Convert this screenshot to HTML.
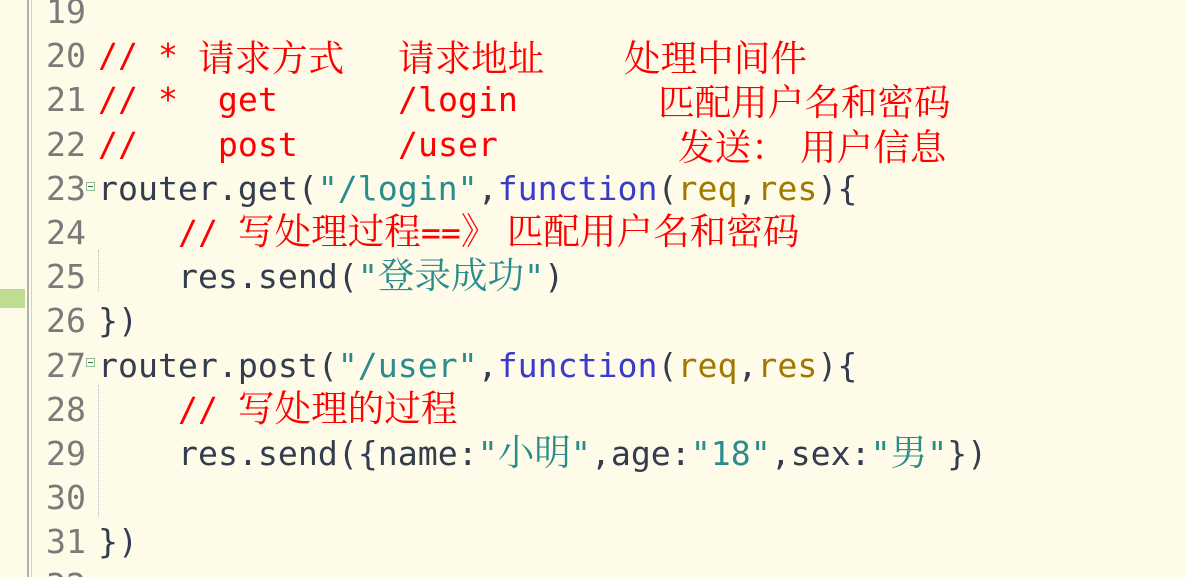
<!DOCTYPE html>
<html style="overflow:hidden;width:1185px;height:577px"><head><meta charset="utf-8"><style>
html,body{margin:0;padding:0;}
body{width:1185px;height:577px;overflow:hidden;background:#fffbe9;font-family:"DejaVu Sans Mono",monospace;font-size:33.2px;}
#w{position:relative;width:1185px;height:577px;overflow:hidden;}
.s{position:absolute;white-space:pre;line-height:44px;height:44px;color:#333d4d;}
.n{position:absolute;width:86px;left:0;text-align:right;color:#7a7a7a;line-height:44px;height:44px;white-space:pre;}
.c{font-family:"Noto Serif CJK SC","Liberation Serif",serif;font-size:36.6px;line-height:20px;}
.r{color:#ff0000}.t{color:#2a8c8c}.f{color:#3a3acc}.o{color:#a07800}
.fold{position:absolute;left:86px;width:7px;height:7px;border:1px solid #8cc08c;background:#fff;}
.fold:after{content:"";position:absolute;left:1px;top:3px;width:5px;height:1px;background:#555;}
.g{position:absolute;left:98px;border-left:1px dotted #b8b8b8;}
</style></head><body><div id="w">
<div style="position:absolute;left:27px;top:0;width:2px;height:577px;background:#b0b0b0"></div>
<div style="position:absolute;left:31px;top:0;width:1px;height:577px;background:#d0d0d0"></div>
<div style="position:absolute;left:0;top:289px;width:25px;height:19px;background:#c0dc90"></div>
<div class="g" style="top:250px;height:42px"></div>
<div class="g" style="top:385px;height:132px"></div>

<div class="n" style="top:-10px">19</div>
<div class="n" style="top:34px">20</div>
<div class="n" style="top:78px">21</div>
<div class="n" style="top:123px">22</div>
<div class="n" style="top:167px">23</div>
<div class="n" style="top:211px">24</div>
<div class="n" style="top:255px">25</div>
<div class="n" style="top:299px">26</div>
<div class="n" style="top:344px">27</div>
<div class="n" style="top:388px">28</div>
<div class="n" style="top:432px">29</div>
<div class="n" style="top:476px">30</div>
<div class="n" style="top:520px">31</div>
<div class="n" style="top:564px;height:13px;overflow:hidden">32</div>
<div class="fold" style="top:182px"></div>
<div class="fold" style="top:358px"></div>

<div class="s r" style="left:98px;top:34px">// * </div>
<div class="s r c" style="left:198px;top:34px;line-height:44px">请求方式</div>
<div class="s r c" style="left:398px;top:34px;line-height:44px">请求地址</div>
<div class="s r c" style="left:624px;top:34px;line-height:44px">处理中间件</div>

<div class="s r" style="left:98px;top:78px">// *  get</div>
<div class="s r" style="left:398px;top:78px">/login</div>
<div class="s r c" style="left:658px;top:78px;line-height:44px">匹配用户名和密码</div>

<div class="s r" style="left:98px;top:123px">//    post</div>
<div class="s r" style="left:398px;top:123px">/user</div>
<div class="s r c" style="left:678px;top:123px;line-height:44px">发送：</div>
<div class="s r c" style="left:800px;top:123px;line-height:44px">用户信息</div>

<div class="s" style="left:98px;top:167px">router.get(<span class="t">"/login"</span>,<span class="f">function</span>(<span class="o">req</span>,<span class="o">res</span>){</div>
<div class="s r" style="left:178px;top:211px">// <span class="c">写处理过程</span>==<span class="c">》 匹配用户名和密码</span></div>
<div class="s" style="left:178px;top:255px">res.send(<span class="t">"<span class="c">登录成功</span>"</span>)</div>
<div class="s" style="left:98px;top:299px">})</div>
<div class="s" style="left:98px;top:344px">router.post(<span class="t">"/user"</span>,<span class="f">function</span>(<span class="o">req</span>,<span class="o">res</span>){</div>
<div class="s r" style="left:178px;top:388px">// <span class="c">写处理的过程</span></div>
<div class="s" style="left:178px;top:432px">res.send({name:<span class="t">"<span class="c">小明</span>"</span>,age:<span class="t">"18"</span>,sex:<span class="t">"<span class="c">男</span>"</span>})</div>
<div class="s" style="left:98px;top:520px">})</div>
</div></body></html>
